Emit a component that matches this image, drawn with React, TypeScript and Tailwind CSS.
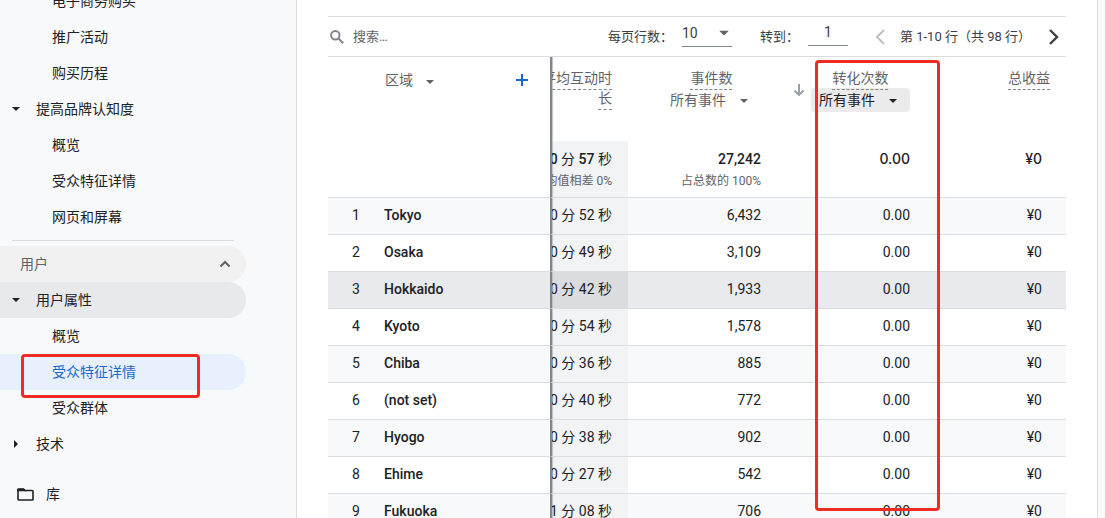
// src/App.tsx
import React from "react";

interface RegionRow {
  name: string;
  time: string;
  events: string;
}

const rows: RegionRow[] = [
  { name: "Tokyo", time: "0 分 52 秒", events: "6,432" },
  { name: "Osaka", time: "0 分 49 秒", events: "3,109" },
  { name: "Hokkaido", time: "0 分 42 秒", events: "1,933" },
  { name: "Kyoto", time: "0 分 54 秒", events: "1,578" },
  { name: "Chiba", time: "0 分 36 秒", events: "885" },
  { name: "(not set)", time: "0 分 40 秒", events: "772" },
  { name: "Hyogo", time: "0 分 38 秒", events: "902" },
  { name: "Ehime", time: "0 分 27 秒", events: "542" },
  { name: "Fukuoka", time: "1 分 08 秒", events: "706" },
];

const Caret: React.FC<{ className?: string }> = ({ className = "" }) => (
  <svg viewBox="0 0 8 4" className={`h-1 w-2 shrink-0 fill-current ${className}`}>
    <path d="M0 0h8L4 4z" />
  </svg>
);

// --- Sidebar ---

const SubLink: React.FC<{ label: string; active?: boolean }> = ({ label, active }) => (
  <li className="relative">
    <a
      href="#"
      className={`mr-[50px] flex h-9 items-center rounded-r-full pl-[52px] ${
        active ? "bg-[#e8f0fe] text-[#1967d2]" : ""
      }`}
    >
      {label}
    </a>
    {active && (
      <span className="pointer-events-none absolute top-0 left-[21px] h-11 w-[179px] rounded-[4px] border-3 border-[#ee2c24]" />
    )}
  </li>
);

const GroupButton: React.FC<{ label: string; closed?: boolean; shaded?: boolean }> = ({
  label,
  closed,
  shaded,
}) => (
  <button
    className={`flex h-9 w-[246px] items-center gap-4 rounded-r-full pl-3 text-left ${
      shaded ? "bg-[#e8e9ea]" : ""
    }`}
  >
    <Caret className={closed ? "-rotate-90" : ""} />
    {label}
  </button>
);

const Sidebar: React.FC = () => (
  <nav className="w-[297px] shrink-0 overflow-hidden border-r border-[#dadce0] bg-[#f8f9fa]">
    <ul className="-mt-[17px]">
      <SubLink label="电子商务购买" />
      <SubLink label="推广活动" />
      <SubLink label="购买历程" />
      <li>
        <GroupButton label="提高品牌认知度" />
        <ul>
          <SubLink label="概览" />
          <SubLink label="受众特征详情" />
          <SubLink label="网页和屏幕" />
        </ul>
      </li>
    </ul>
    <hr className="mt-[5px] mr-[62px] mb-[5px] ml-3 border-[#dadce0]" />
    <button className="flex h-9 w-[246px] items-center justify-between rounded-r-full bg-[#f1f1f2] pr-4 pl-5 text-[#5f6368]">
      用户
      <svg viewBox="0 0 10 10" className="h-[10px] w-[10px] fill-none stroke-current stroke-2">
        <path d="M0.5 7.5 5 3l4.500 4.500" />
      </svg>
    </button>
    <ul>
      <li>
        <GroupButton label="用户属性" shaded />
        <ul>
          <SubLink label="概览" />
          <SubLink label="受众特征详情" active />
          <SubLink label="受众群体" />
        </ul>
      </li>
      <li>
        <GroupButton label="技术" closed />
      </li>
    </ul>
    <a href="#" className="mt-[14px] flex h-9 items-center gap-3 pl-[17px]">
      <svg viewBox="0 0 17 13" className="h-[13px] w-[17px] fill-none stroke-current stroke-[1.600]">
        <path d="M1 2v9.200q0 .8.800.8h13.400q.8 0 .8-.8V3.300q0-.8-.8-.8H8L6.500 1H1.800Q1 1 1 2z" />
        <path d="M1 1.500h5.500l1 1H1z" fill="currentColor" />
      </svg>
      库
    </a>
  </nav>
);

// --- Toolbar above the table ---

const Toolbar: React.FC = () => (
  <div className="mt-4 flex h-[41px] items-center border-y border-[#dadce0] text-[13px] text-[#3c4043]">
    <svg viewBox="0 0 14 14" className="ml-[2px] h-[14px] w-[14px] shrink-0 fill-none stroke-[#80868b] stroke-2">
      <circle cx="5.300" cy="5.300" r="4.200" />
      <path d="m8.500 8.500 4.700 4.700" />
    </svg>
    <input
      aria-label="搜索"
      placeholder="搜索…"
      className="ml-[9px] min-w-0 flex-1 outline-none placeholder:text-[#5f6368]"
    />
    <label htmlFor="page-size">每页行数：</label>
    <div className="relative ml-[9px] mr-7">
      <select
        id="page-size"
        className="mb-1 block h-6 w-[50px] appearance-none border-b border-[#80868b] pb-1 text-[14px] outline-none"
      >
        <option>10</option>
      </select>
      <Caret className="pointer-events-none absolute top-2 right-1 scale-125 text-[#5f6368]" />
    </div>
    <label htmlFor="go-to">转到：</label>
    <input
      id="go-to"
      defaultValue="1"
      className="mb-1 ml-[9px] h-[22px] w-10 border-b border-[#80868b] pb-1 text-center text-[14px] outline-none"
    />
    <button aria-label="上一页" className="ml-5 flex w-6 justify-center text-[#bdc1c6]">
      <svg viewBox="0 0 10 16" className="h-4 w-[10px] fill-none stroke-current stroke-2">
        <path d="M9 1 2 8l7 7" />
      </svg>
    </button>
    <span className="ml-2 whitespace-nowrap">第 1-10 行（共 98 行）</span>
    <button aria-label="下一页" className="ml-[11px] flex w-6 justify-center text-[#3c4043]">
      <svg viewBox="0 0 10 16" className="h-4 w-[10px] fill-none stroke-current stroke-[2.400]">
        <path d="m1 1 7 7-7 7" />
      </svg>
    </button>
  </div>
);

// --- Table ---

const Metric: React.FC<{ children: React.ReactNode }> = ({ children }) => (
  <span className="relative z-10 underline decoration-[#80868b] decoration-dashed decoration-1 underline-offset-[6px]">
    {children}
  </span>
);

const EventSelect: React.FC<{ label: string; shaded?: boolean }> = ({ label, shaded }) => (
  <div className="relative">
    <select
      aria-label={label}
      className={`block h-6 w-[99px] appearance-none rounded-[4px] px-2 outline-none ${
        shaded ? "bg-[#ebebeb] text-[#202124]" : ""
      }`}
    >
      <option>所有事件</option>
    </select>
    <Caret
      className={`pointer-events-none absolute top-[11px] right-[13px] ${shaded ? "text-[#202124]" : ""}`}
    />
  </div>
);

// edge of the frozen columns, with the scrolled ones running under it
const frozenEdge =
  "overflow-hidden border-l-2 border-l-[#80868b] pr-4 shadow-[inset_2px_0_1px_-1px_#bdc1c6]";

const rowColor = (i: number) => {
  if (i === 2) return "bg-[#e8eaed]";
  return i % 2 === 0 ? "bg-[#f8f9fa]" : "bg-white";
};

const RegionTable: React.FC = () => (
  <table className="w-full table-fixed border-separate border-spacing-0 text-right">
    <colgroup>
      <col className="w-14" />
      <col />
      <col className="w-[78px]" />
      <col className="w-[149px]" />
      <col className="w-[149px]" />
      <col className="w-[140px]" />
    </colgroup>
    <thead className="text-[#5f6368]">
      <tr className="h-[84px] align-top">
        <th colSpan={2} className="pt-[11px] pr-[22px] pl-[57px] font-normal">
          <div className="flex h-6 items-center justify-between">
            <div className="relative">
              <select aria-label="维度" className="w-[51px] appearance-none outline-none">
                <option>区域</option>
              </select>
              <Caret className="pointer-events-none absolute top-[10px] right-[2px]" />
            </div>
            <button aria-label="添加维度" className="text-[#1967d2]">
              <svg viewBox="0 0 12 12" className="h-3 w-3 fill-none stroke-current stroke-2">
                <path d="M6 0v12M0 6h12" />
              </svg>
            </button>
          </div>
        </th>
        <th className={`${frozenEdge} pt-[11px] font-normal`}>
          <div className="flex justify-end overflow-hidden">
            <div className="w-[70px] shrink-0 pb-1">
              <Metric>平均互动时长</Metric>
            </div>
          </div>
        </th>
        <th className="pt-[11px] pr-4 font-normal">
          <div className="flex flex-col items-end">
            <div className="w-[99px] text-center">
              <Metric>事件数</Metric>
            </div>
            <EventSelect label="事件数" />
          </div>
        </th>
        <th className="relative pt-[11px] pr-4 font-normal">
          <div className="flex items-center justify-between pl-4">
            <svg viewBox="0 0 12 12" className="h-3 w-3 fill-none stroke-[#9aa0a6] stroke-2">
              <path d="M6 0v11M1.500 6.500 6 11l4.500-4.500" />
            </svg>
            <div>
              <div className="text-center">
                <Metric>转化次数</Metric>
              </div>
              <EventSelect label="转化次数" shaded />
            </div>
          </div>
          <span className="pointer-events-none absolute top-[3px] left-[38px] z-20 h-[451px] w-[125px] rounded-[4px] border-3 border-[#ee2c24]" />
        </th>
        <th className="pt-[11px] pr-4 font-normal">
          <Metric>总收益</Metric>
        </th>
      </tr>
    </thead>
    <tbody className="text-[#202124] [&_td]:border-b [&_td]:border-b-[#dadce0]">
      <tr className="h-[57px] align-top leading-[22px]">
        <td colSpan={2} />
        <td className={`${frozenEdge} bg-[#f1f3f4] pt-[7px]`}>
          <div className="flex justify-end whitespace-pre">
            <span className="font-medium">0</span> 分 <span className="font-medium">57</span> 秒
          </div>
          <div className="flex justify-end text-[12px] leading-[22px] whitespace-nowrap text-[#5f6368]">
            与平均值相差 0%
          </div>
        </td>
        <td className="pt-[7px] pr-4">
          <div className="font-medium">27,242</div>
          <div className="text-[12px] leading-[22px] text-[#5f6368]">占总数的 100%</div>
        </td>
        <td className="pt-[7px] pr-4 font-['Inter'] font-medium">0.00</td>
        <td className="pt-[7px] pr-6 font-['Inter'] font-medium">¥0</td>
      </tr>
      {rows.map((row, i) => (
        <tr key={row.name} className={`h-[37px] [&>td]:pb-[2px] ${rowColor(i)}`}>
          <td className="text-center">{i + 1}</td>
          <td className="text-left font-medium">{row.name}</td>
          <td className={`${frozenEdge} ${i === 2 ? "bg-[#dadce0]" : "bg-[#f1f3f4]"}`}>
            <div className="flex justify-end whitespace-nowrap">{row.time}</div>
          </td>
          <td className="pr-4">{row.events}</td>
          <td className="pr-4">0.00</td>
          <td className="pr-6">¥0</td>
        </tr>
      ))}
    </tbody>
  </table>
);

export default function App() {
  return (
    <div className="flex h-screen overflow-hidden bg-[#f8f9fa] font-['Roboto','Noto_Sans_CJK_SC',sans-serif] text-[14px] leading-5 text-[#202124]">
      <Sidebar />
      <main className="mr-[7px] min-w-0 flex-1 overflow-hidden border-r border-[#dadce0] bg-white pr-[31px] pl-[31px]">
        <Toolbar />
        <RegionTable />
      </main>
    </div>
  );
}
